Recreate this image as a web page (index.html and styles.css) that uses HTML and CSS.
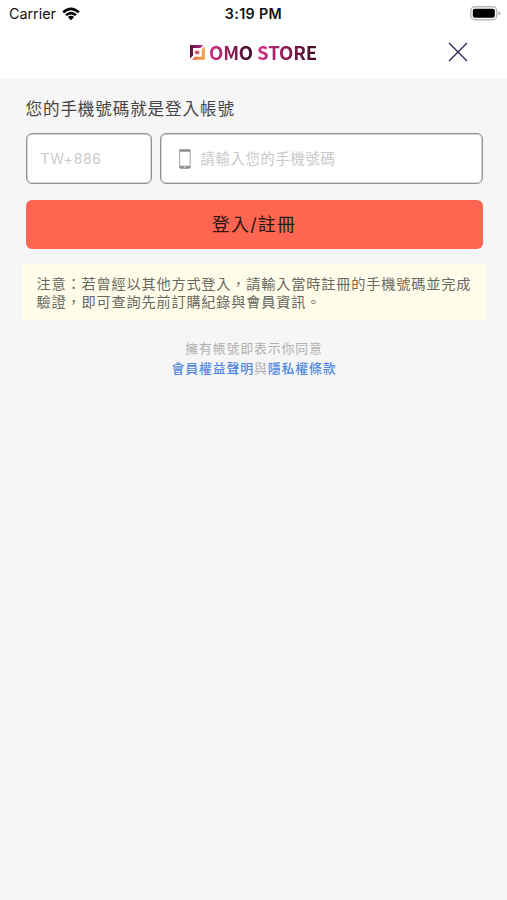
FILE: index.html
```html
<!DOCTYPE html>
<html lang="zh-Hant">
<head>
    <meta charset="UTF-8">
    <meta name="viewport" content="width=device-width, initial-scale=1.0">
    <title>OMO STORE</title>
    <link rel="stylesheet" href="styles.css">
</head>
<body>
    <div class="status-bar">
        <div class="carrier">
            <span>Carrier</span>
            <svg class="wifi" width="18" height="14" viewBox="0 0 18 14">
                <path d="M0.3 4.5 Q9 -3.7 17.7 4.5 L15.9 6.3 Q9 0.1 2.1 6.3 Z"/>
                <path d="M3.1 7.3 Q9 2.1 14.9 7.3 L13.1 9.1 Q9 5.7 4.9 9.1 Z"/>
                <path d="M5.9 10.1 Q9 7.6 12.1 10.1 L9 13.3 Z"/>
            </svg>
        </div>
        <div class="time">3:19 PM</div>
        <div class="battery">
            <svg width="31" height="15" viewBox="0 0 31 15">
                <rect x="0.8" y="0.8" width="26" height="13" rx="4" fill="#fff" stroke="#b9b9b9" stroke-width="1.4"/>
                <rect x="2.8" y="2.8" width="22" height="9" rx="2" fill="#000"/>
                <path d="M28.5 5 Q30.4 6 30.4 7.3 Q30.4 8.6 28.5 9.6 Z" fill="#b0b0b0"/>
            </svg>
        </div>
    </div>

    <header class="header">
        <div class="logo">
            <svg width="15" height="15" viewBox="0 0 15 15">
                <defs>
                    <linearGradient id="top" x1="0" y1="0" x2="1" y2="0">
                        <stop offset="0" stop-color="#5c0e3e"/>
                        <stop offset="1" stop-color="#b82c78"/>
                    </linearGradient>
                    <linearGradient id="bottom" x1="0" y1="0" x2="1" y2="0">
                        <stop offset="0" stop-color="#e7683c"/>
                        <stop offset="1" stop-color="#f5a447"/>
                    </linearGradient>
                </defs>
                <path d="M0 0 H13.2 L10.4 3 H3 V10.8 L0 13.2 Z" fill="url(#top)"/>
                <path d="M14.8 1.2 V14.8 H2 L4.8 11.8 H11.8 V4.2 Z" fill="url(#bottom)"/>
                <path d="M4.4 5.4 H9.8 V9.6 H4.4 Z" fill="#f6c9b8"/>
                <path d="M5.4 6.2 H8.8 V8.6 H5.4 Z" fill="#b83260"/>
            </svg>
            <span class="logo-text"><span class="word">OMO</span> <span class="word">STORE</span></span>
        </div>
        <button class="close" aria-label="關閉">
            <svg width="20" height="20" viewBox="0 0 20 20">
                <path d="M1 1 L19 19 M19 1 L1 19" stroke="#252250" stroke-width="1.3"/>
            </svg>
        </button>
    </header>

    <main class="content">
        <h1 class="title">您的手機號碼就是登入帳號</h1>
        <div class="fields">
            <input class="field country" type="text" placeholder="TW+886">
            <label class="field phone">
                <svg width="12" height="20" viewBox="0 0 12 20">
                    <rect x="0.6" y="0.6" width="10.6" height="18.8" rx="1.3" fill="#fff" stroke="#a5a5a5"/>
                    <path d="M0.6 0.6 H11.2 V2.8 H0.6 Z M0.6 16.8 H11.2 V19.2 H0.6 Z" fill="#8d8d8d"/>
                    <path d="M4.8 18 H7" stroke="#fff" stroke-width="0.8"/>
                </svg>
                <input class="phone-input" type="tel" placeholder="請輸入您的手機號碼">
            </label>
        </div>
        <button class="submit">登入/註冊</button>
        <p class="notice">注意：若曾經以其他方式登入，請輸入當時註冊的手機號碼並完成驗證，即可查詢先前訂購紀錄與會員資訊。</p>
        <p class="terms">擁有帳號即表示你同意<br><a href="#">會員權益聲明</a>與<a href="#">隱私權條款</a></p>
    </main>
</body>
</html>
```
FILE: styles.css
```css
* {
    box-sizing: border-box;
}
body {
    margin: 0;
    min-height: 100vh;
    background: #f6f6f6;
    font-family: Inter, "Noto Sans CJK TC", sans-serif;
}
.status-bar {
    display: grid;
    grid-template-columns: 1fr auto 1fr;
    align-items: center;
    height: 27px;
    padding: 0 6px 0 9px;
    background: #fff;
    color: #111;
    font-size: 14.3px;
}
.carrier {
    display: flex;
    align-items: center;
    gap: 6px;
}
.wifi {
    fill: #000;
}
.time {
    margin-right: 3px;
    font-weight: 600;
    letter-spacing: 0.35px;
}
.battery {
    display: flex;
    justify-content: flex-end;
}
.header {
    display: grid;
    grid-template-columns: 1fr auto 1fr;
    align-items: center;
    height: 52px;
    padding: 0 39px 2px;
    background: #fff;
}
.logo {
    grid-column: 2;
    display: flex;
    align-items: center;
    gap: 4px;
}
.logo-text {
    font-family: "Noto Sans CJK TC", sans-serif;
    font-size: 18.6px;
    font-weight: 700;
    line-height: 24px;
    letter-spacing: -0.15px;
    white-space: nowrap;
}
.word {
    background: linear-gradient(90deg, #d62f86, #3d0a24);
    -webkit-background-clip: text;
    background-clip: text;
    color: transparent;
}
.close {
    justify-self: end;
    display: flex;
    padding: 0;
    border: none;
    background: none;
}
.content {
    padding: 18px 24.5px 0 25.5px;
}
.title {
    margin: 0;
    color: #444;
    font-size: 16.6px;
    font-weight: 400;
    line-height: 25px;
    letter-spacing: 0.85px;
}
.fields {
    display: flex;
    gap: 8px;
    margin-top: 11px;
}
.field {
    height: 51px;
    border: 1px solid #949494;
    border-radius: 6px;
    background: #fff;
    box-shadow: inset 0 0 0 0.5px #aaa;
}
.country {
    width: 126px;
    padding: 0 14px;
    font-family: inherit;
    font-size: 14px;
    letter-spacing: 0.6px;
}
.phone {
    flex: 1;
    display: flex;
    align-items: center;
    gap: 10px;
    padding: 0 18px;
}
.phone-input {
    flex: 1;
    min-width: 0;
    padding: 0;
    border: none;
    font-family: inherit;
    font-size: 14.3px;
    letter-spacing: 0.7px;
}
::placeholder {
    color: #c9c9c9;
}
.submit {
    display: block;
    width: 100%;
    height: 49px;
    margin-top: 16px;
    padding: 0 0 3px;
    border: none;
    border-radius: 6px;
    background: #ff6652;
    color: #2b1512;
    font-family: inherit;
    font-size: 18px;
    letter-spacing: 1.2px;
}
.notice {
    margin: 15px -4px 0;
    padding: 11px 15px 10px;
    background: #fffde9;
    color: #686862;
    font-size: 14.2px;
    line-height: 17.5px;
    letter-spacing: 0.8px;
}
.terms {
    margin: 19px 0 0;
    color: #b0b0b0;
    font-size: 12.9px;
    line-height: 20px;
    letter-spacing: 0.85px;
    text-align: center;
}
.terms a {
    color: #5088e0;
    font-weight: 500;
    text-decoration: none;
}
```
